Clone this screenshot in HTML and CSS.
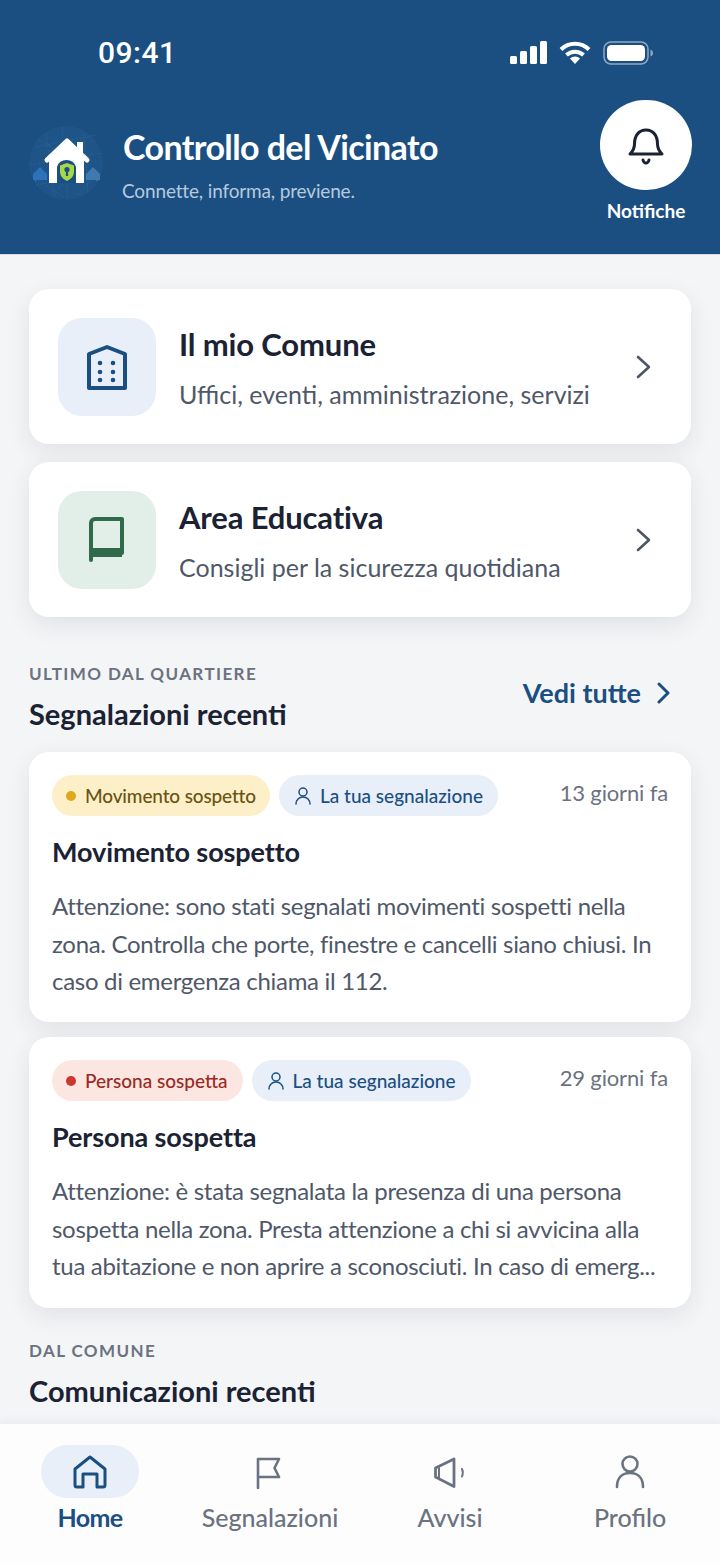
FILE: index.html
```html
<!DOCTYPE html>
<html lang="it">
<head>
    <meta charset="UTF-8">
    <meta name="viewport" content="width=device-width, initial-scale=1.0">
    <title>Controllo del Vicinato</title>
    <link rel="stylesheet" href="styles.css">
</head>
<body>
    <div class="app">
        <header class="header">
            <div class="status-bar">
                <span class="clock">09:41</span>
                <div class="status-icons">
                    <svg width="37" height="23" viewBox="0 0 37 23" fill="#fff"><rect x="0" y="15" width="7" height="8" rx="1.5"/><rect x="10" y="10" width="7" height="13" rx="1.5"/><rect x="20" y="5" width="7" height="18" rx="1.5"/><rect x="30" y="0" width="7" height="23" rx="1.5"/></svg>
                    <svg width="32" height="23" viewBox="0 0 32 23" fill="none" stroke="#fff" stroke-width="4"><path d="M2 8.500a20 20 0 0 1 28 0"/><path d="M7.500 14a12.500 12.500 0 0 1 17 0"/><path d="M16 23l-5-5.500a7 7 0 0 1 10 0z" fill="#fff" stroke="none"/></svg>
                    <svg width="50" height="24" viewBox="0 0 50 24" fill="none"><rect x="1" y="1" width="44" height="22" rx="7" stroke="#8fa9c4" stroke-width="1.500"/><rect x="4" y="4" width="38" height="16" rx="4.500" fill="#fff"/><path d="M47.500 8.500c1.500.5 2.500 2 2.500 3.500s-1 3-2.500 3.500z" fill="#8fa9c4"/></svg>
                </div>
            </div>
            <div class="brand-row">
                <svg class="logo" width="76" height="76" viewBox="0 0 76 76" fill="none">
                    <circle cx="38" cy="38" r="37" fill="#1e5487"/>
                    <g stroke="#27608f" stroke-width="1" stroke-dasharray="3 1">
                        <path d="M8 22L68 10M2 40L74 28M8 60L68 50M18 8L26 70M34 2L40 74M56 8L60 68M10 14L46 36M30 64L66 26M14 58L36 72M50 70L70 48"/>
                    </g>
                    <path d="M5 49l7-7 7 7v6H9l-2 2v-2H5z" fill="#2d72b8"/>
                    <path d="M58 49l7-7 7 7v6h-2v2l-2-2H58z" fill="#3f79ae"/>
                    <path d="M21 34v24h35V34L39 18z" fill="#fff"/>
                    <path d="M29 58V42a10 10 0 0 1 19 0v16z" fill="#1b4f82"/>
                    <path d="M39 38l7 2.500v6c0 5-3.500 7.500-7 9.500-3.500-2-7-4.500-7-9.500v-6z" fill="#a6d64a"/>
                    <circle cx="39" cy="44.500" r="2.600" fill="#1b4f82"/>
                    <rect x="37.900" y="45" width="2.200" height="6" fill="#1b4f82"/>
                    <path d="M19 35l20-19 20 19" stroke="#fff" stroke-width="5" stroke-linecap="round" stroke-linejoin="round"/>
                    <rect x="49" y="17" width="6" height="13" fill="#fff"/>
                </svg>
                <div class="brand-text">
                    <h1 class="brand-title">Controllo del Vicinato</h1>
                    <p class="brand-sub">Connette, informa, previene.</p>
                </div>
                <div class="bell-wrap">
                    <div class="bell-circle">
                        <svg width="40" height="40" viewBox="0 0 40 40" fill="none" stroke="#1a2233" stroke-width="3" stroke-linecap="round" stroke-linejoin="round"><path d="M4 29c3-3 4.500-5 4.500-10 0-8 4-14 11.500-14s11.500 6 11.500 14c0 5 1.500 7 4.500 10z"/><path d="M17 35c.5 2 1.500 3 3 3s2.500-1 3-3"/></svg>
                    </div>
                    <span class="bell-label">Notifiche</span>
                </div>
            </div>
        </header>

        <main class="content">
            <a class="menu-card">
                <div class="menu-icon menu-icon-blue">
                    <svg width="40" height="46" viewBox="0 0 40 46" fill="none"><path d="M2 44V10L20 3l18 7v34z" stroke="#1b4f82" stroke-width="4" stroke-linejoin="round"/><g fill="#1b4f82"><circle cx="13" cy="19" r="2.300"/><circle cx="26" cy="19" r="2.300"/><circle cx="13" cy="28" r="2.300"/><circle cx="26" cy="28" r="2.300"/><circle cx="13" cy="36" r="2.300"/><circle cx="26" cy="36" r="2.300"/></g></svg>
                </div>
                <div class="menu-text">
                    <h2 class="menu-title">Il mio Comune</h2>
                    <p class="menu-sub">Uffici, eventi, amministrazione, servizi</p>
                </div>
                <svg class="chevron" width="16" height="24" viewBox="0 0 16 24" fill="none" stroke="#4d5666" stroke-width="2.600" stroke-linecap="round" stroke-linejoin="round"><path d="M3 2l11 10L3 22"/></svg>
            </a>
            <a class="menu-card">
                <div class="menu-icon menu-icon-green">
                    <svg class="book-icon" width="36" height="46" viewBox="0 0 36 46" fill="none"><path d="M3 43V6a4 4 0 0 1 4-4h27v34H7" stroke="#2f6b4a" stroke-width="4" stroke-linejoin="round" stroke-linecap="round"/><path d="M5 31h29v9H5z" fill="#2f6b4a"/></svg>
                </div>
                <div class="menu-text">
                    <h2 class="menu-title">Area Educativa</h2>
                    <p class="menu-sub">Consigli per la sicurezza quotidiana</p>
                </div>
                <svg class="chevron" width="16" height="24" viewBox="0 0 16 24" fill="none" stroke="#4d5666" stroke-width="2.600" stroke-linecap="round" stroke-linejoin="round"><path d="M3 2l11 10L3 22"/></svg>
            </a>

            <div class="section-head">
                <div>
                    <div class="eyebrow">ULTIMO DAL QUARTIERE</div>
                    <h2 class="section-title">Segnalazioni recenti</h2>
                </div>
                <a class="see-all">Vedi tutte
                    <svg width="14" height="22" viewBox="0 0 14 22" fill="none" stroke="#1b4f82" stroke-width="3" stroke-linecap="round" stroke-linejoin="round"><path d="M2 2l9 9-9 9"/></svg>
                </a>
            </div>

            <article class="report">
                <div class="report-top">
                    <span class="pill pill-yellow"><i class="dot dot-yellow"></i>Movimento sospetto</span>
                    <span class="pill pill-blue">
                        <svg width="16" height="18" viewBox="0 0 16 18" fill="none" stroke="#1b4f82" stroke-width="1.500" stroke-linecap="round"><circle cx="8" cy="5" r="4"/><path d="M1 17c0-4 3-7 7-7s7 3 7 7"/></svg>
                        La tua segnalazione</span>
                    <span class="report-time">13 giorni fa</span>
                </div>
                <h3 class="report-title">Movimento sospetto</h3>
                <p class="report-body">Attenzione: sono stati segnalati movimenti sospetti nella zona. Controlla che porte, finestre e cancelli siano chiusi. In caso di emergenza chiama il 112.</p>
            </article>
            <article class="report">
                <div class="report-top">
                    <span class="pill pill-red"><i class="dot dot-red"></i>Persona sospetta</span>
                    <span class="pill pill-blue">
                        <svg width="16" height="18" viewBox="0 0 16 18" fill="none" stroke="#1b4f82" stroke-width="1.500" stroke-linecap="round"><circle cx="8" cy="5" r="4"/><path d="M1 17c0-4 3-7 7-7s7 3 7 7"/></svg>
                        La tua segnalazione</span>
                    <span class="report-time">29 giorni fa</span>
                </div>
                <h3 class="report-title">Persona sospetta</h3>
                <p class="report-body">Attenzione: è stata segnalata la presenza di una persona sospetta nella zona. Presta attenzione a chi si avvicina alla tua abitazione e non aprire a sconosciuti. In caso di emerg...</p>
            </article>

            <div class="section-head section-head-last">
                <div>
                    <div class="eyebrow">DAL COMUNE</div>
                    <h2 class="section-title">Comunicazioni recenti</h2>
                </div>
            </div>
        </main>

        <nav class="tabbar">
            <a class="tab tab-active">
                <span class="tab-icon">
                    <svg width="34" height="34" viewBox="0 0 34 34" fill="none" stroke="#1b4f82" stroke-width="3" stroke-linejoin="round"><path d="M2 14L17 2l15 12v16a2 2 0 0 1-2 2h-6V19H10v13H4a2 2 0 0 1-2-2z"/></svg>
                </span>
                Home
            </a>
            <a class="tab">
                <span class="tab-icon">
                    <svg width="28" height="34" viewBox="0 0 28 34" fill="none" stroke="#6b7280" stroke-width="2.600" stroke-linejoin="round" stroke-linecap="round"><path d="M2 33V4h21l-4.500 9 4.500 9H2"/></svg>
                </span>
                Segnalazioni
            </a>
            <a class="tab">
                <span class="tab-icon">
                    <svg width="34" height="34" viewBox="0 0 34 34" fill="none" stroke="#6b7280" stroke-width="2.800" stroke-linejoin="round" stroke-linecap="round"><path d="M2.500 13v9l18.500 9.500V4z"/><path d="M6 12.500v10" stroke-width="2"/><path d="M29 14c1 2 1 5 0 7.500" stroke-width="2"/></svg>
                </span>
                Avvisi
            </a>
            <a class="tab">
                <span class="tab-icon">
                    <svg width="30" height="34" viewBox="0 0 30 34" fill="none" stroke="#6b7280" stroke-width="2.600" stroke-linecap="round"><circle cx="15" cy="9" r="7.500"/><path d="M2 32c0-9 5-14 13-14s13 5 13 14"/></svg>
                </span>
                Profilo
            </a>
        </nav>
    </div>
</body>
</html>
```

FILE: styles.css
```css
* {
    box-sizing: border-box;
}
body {
    margin: 0;
    font-family: "Lato", "Noto Sans", sans-serif;
    color: #1a2233;
}
h1, h2, h3, p {
    margin: 0;
}
.app {
    width: 720px;
    height: 1565px;
    display: flex;
    flex-direction: column;
    overflow: hidden;
    background: #f4f5f7;
}
.header {
    height: 255px;
    flex: none;
    background: #1b4f82;
    color: #fff;
    border-bottom: 1px solid #d5dde6;
}
.status-bar {
    height: 100px;
    padding: 34px 67px 0 98px;
    display: flex;
    justify-content: space-between;
}
.clock {
    font-family: "Roboto", sans-serif;
    font-size: 30px;
    line-height: 38px;
    font-weight: 500;
    letter-spacing: 0.5px;
}
.status-icons {
    display: flex;
    gap: 12px;
    align-items: flex-start;
    padding-top: 7px;
}
.brand-row {
    display: flex;
    padding-left: 28px;
    padding-right: 28px;
}
.logo {
    margin-top: 25px;
    flex: none;
}
.brand-text {
    flex: 1;
    padding: 26px 0 0 19px;
}
.brand-title {
    font-size: 34px;
    line-height: 42px;
    font-weight: 700;
    letter-spacing: -0.6px;
}
.brand-sub {
    margin-top: 11px;
    margin-left: -1px;
    font-size: 19px;
    line-height: 24px;
    letter-spacing: -0.15px;
    color: #b7cadd;
}
.bell-wrap {
    width: 92px;
    display: flex;
    flex-direction: column;
    align-items: center;
}
.bell-circle {
    width: 92px;
    height: 90px;
    border-radius: 46px;
    background: #fff;
    display: flex;
    align-items: center;
    justify-content: center;
}
.bell-label {
    margin-top: 9px;
    font-size: 19px;
    line-height: 24px;
    font-weight: 700;
    white-space: nowrap;
}
.content {
    flex: 1;
    min-height: 0;
    overflow: hidden;
    padding: 34px 29px 0;
}
.menu-card {
    height: 155px;
    margin-bottom: 18px;
    padding: 0 40px 0 29px;
    display: flex;
    align-items: center;
    background: #fff;
    border-radius: 20px;
    box-shadow: 0 8px 24px rgba(30, 40, 60, 0.09);
}
.menu-icon {
    width: 98px;
    height: 98px;
    flex: none;
    border-radius: 24px;
    display: flex;
    align-items: center;
    justify-content: center;
}
.menu-icon-blue {
    background: #e8eff8;
}
.menu-icon-green {
    background: #e2efe8;
}
.book-icon {
    margin-right: 3px;
}
.menu-text {
    flex: 1;
    padding-left: 23px;
}
.menu-title {
    font-size: 31px;
    line-height: 40px;
    font-weight: 700;
    letter-spacing: -0.15px;
}
.menu-sub {
    margin-top: 14px;
    font-size: 25px;
    line-height: 32px;
    letter-spacing: 0;
    color: #4f5869;
}
.section-head {
    margin-top: 46px;
    margin-bottom: 19px;
    display: flex;
    justify-content: space-between;
    align-items: flex-start;
}
.section-head-last {
    margin-top: 32px;
}
.eyebrow {
    font-size: 17px;
    line-height: 22px;
    font-weight: 700;
    letter-spacing: 1.4px;
    color: #6b7280;
}
.section-title {
    margin-top: 10px;
    font-size: 29px;
    line-height: 38px;
    font-weight: 700;
}
.see-all {
    margin-top: 13px;
    margin-right: 20px;
    display: flex;
    align-items: center;
    gap: 16px;
    font-size: 27px;
    line-height: 34px;
    font-weight: 700;
    color: #1b4f82;
}
.report {
    height: 270px;
    margin-bottom: 15px;
    padding: 23px 23px 0;
    background: #fff;
    border-radius: 20px;
    box-shadow: 0 8px 24px rgba(30, 40, 60, 0.09);
}
.report + .report {
    height: 271px;
}
.report-top {
    display: flex;
    gap: 9px;
    align-items: flex-start;
}
.pill {
    height: 41px;
    padding: 0 15px 0 14px;
    border-radius: 21px;
    display: flex;
    align-items: center;
    gap: 9px;
    font-size: 19px;
    font-weight: 500;
    white-space: nowrap;
}
.pill-yellow {
    padding-right: 14px;
    background: #fdf0c8;
    color: #6b5312;
    letter-spacing: -0.15px;
}
.pill-red {
    background: #fbe6e2;
    color: #9a2a22;
}
.pill-blue {
    padding-left: 16px;
    background: #e8eff8;
    color: #1b4f82;
}
.dot {
    width: 10px;
    height: 10px;
    border-radius: 5px;
}
.dot-yellow {
    background: #e0a81c;
}
.dot-red {
    background: #c9382e;
}
.report-time {
    margin-left: auto;
    font-size: 22px;
    line-height: 36px;
    letter-spacing: -0.15px;
    color: #6b7280;
}
.report-title {
    margin-top: 18px;
    font-size: 27px;
    line-height: 36px;
    font-weight: 700;
    letter-spacing: -0.1px;
}
.report-body {
    margin-top: 17px;
    font-size: 24px;
    line-height: 37.500px;
    letter-spacing: -0.3px;
    color: #4f5869;
}
.tabbar {
    height: 141px;
    flex: none;
    display: grid;
    grid-template-columns: repeat(4, 1fr);
    background: #fdfdfe;
    box-shadow: 0 -2px 10px rgba(30, 40, 60, 0.06);
    position: relative;
}
.tab {
    padding-top: 21px;
    display: flex;
    flex-direction: column;
    align-items: center;
    font-size: 25px;
    line-height: 34px;
    font-weight: 500;
    color: #6b7280;
}
.tab-active {
    color: #1b4f82;
    font-weight: 700;
    letter-spacing: -0.6px;
}
.tab-icon {
    width: 98px;
    height: 53px;
    margin-bottom: 2px;
    border-radius: 27px;
    display: flex;
    align-items: center;
    justify-content: center;
}
.tab-active .tab-icon {
    background: #e8eff8;
}
```
